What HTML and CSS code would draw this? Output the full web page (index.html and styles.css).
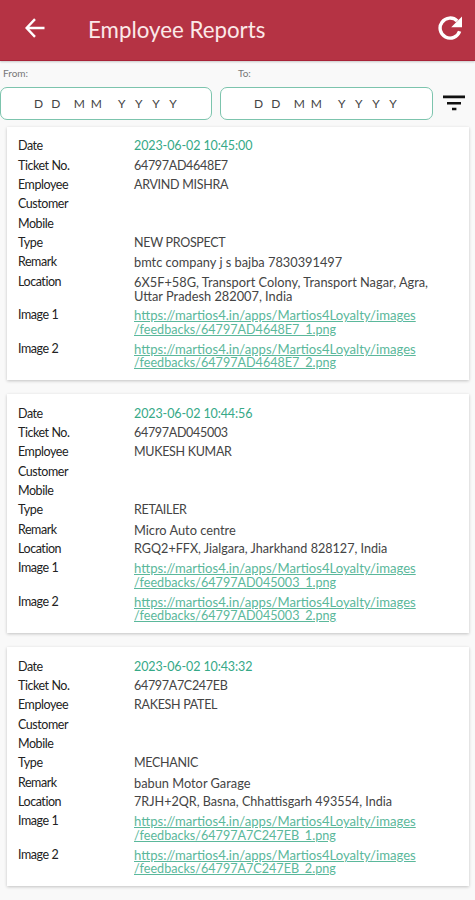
FILE: index.html
```
<!DOCTYPE html>
<html lang="en">
  <head>
    <meta charset="utf-8">
    <title>Employee Reports</title>
    <link rel="stylesheet" href="styles.css">
  </head>
  <body>
    <header class="topbar">
      <svg class="icon-back" viewBox="0 0 20 20" fill="none" stroke="#fff" stroke-width="2.4">
        <path d="M19.5 10H2M10 1.2L1.6 10L10 18.8" />
      </svg>
      <h1>Employee Reports</h1>
      <svg class="icon-refresh" viewBox="0 0 24 24" fill="none" stroke="#fff" stroke-width="3.4">
        <path d="M19.2 5A10 10 0 1 0 21.6 15.2" />
        <path d="M24 0.5V11.2H13.2z" fill="#fff" stroke="none" />
      </svg>
    </header>
    <section class="filters">
      <div class="field">
        <label>From:</label>
        <div class="date-box"><span class="dd">DD</span><span class="mm">MM</span><span class="yyyy">YYYY</span></div>
      </div>
      <div class="field field-to">
        <label>To:</label>
        <div class="date-box"><span class="dd">DD</span><span class="mm">MM</span><span class="yyyy">YYYY</span></div>
      </div>
      <svg class="icon-filter" viewBox="0 0 22 16" fill="#111">
        <path d="M0 0.6h22v2.6H0zM4 7h14v2.5H4zM9 12.8h4.4v2.4H9z" />
      </svg>
    </section>
    <main class="reports">
      <dl class="card">
        <dt>Date</dt><dd class="date">2023-06-02 10:45:00</dd>
        <dt>Ticket No.</dt><dd class="caps">64797AD4648E7</dd>
        <dt>Employee</dt><dd class="caps">ARVIND MISHRA</dd>
        <dt>Customer</dt><dd></dd>
        <dt>Mobile</dt><dd></dd>
        <dt>Type</dt><dd class="caps">NEW PROSPECT</dd>
        <dt>Remark</dt><dd>bmtc company j s bajba 7830391497</dd>
        <dt>Location</dt><dd>6X5F+58G, Transport Colony, Transport Nagar, Agra,<br>Uttar Pradesh 282007, India</dd>
        <dt>Image 1</dt><dd><a class="link">https://martios4.in/apps/Martios4Loyalty/images<span class="file">/feedbacks/64797AD4648E7_1.png</span></a></dd>
        <dt>Image 2</dt><dd><a class="link">https://martios4.in/apps/Martios4Loyalty/images<span class="file">/feedbacks/64797AD4648E7_2.png</span></a></dd>
      </dl>
      <dl class="card">
        <dt>Date</dt><dd class="date">2023-06-02 10:44:56</dd>
        <dt>Ticket No.</dt><dd class="caps">64797AD045003</dd>
        <dt>Employee</dt><dd class="caps">MUKESH KUMAR</dd>
        <dt>Customer</dt><dd></dd>
        <dt>Mobile</dt><dd></dd>
        <dt>Type</dt><dd class="caps">RETAILER</dd>
        <dt>Remark</dt><dd>Micro Auto centre</dd>
        <dt>Location</dt><dd class="short">RGQ2+FFX, Jialgara, Jharkhand 828127, India</dd>
        <dt>Image 1</dt><dd><a class="link">https://martios4.in/apps/Martios4Loyalty/images<span class="file">/feedbacks/64797AD045003_1.png</span></a></dd>
        <dt>Image 2</dt><dd><a class="link">https://martios4.in/apps/Martios4Loyalty/images<span class="file">/feedbacks/64797AD045003_2.png</span></a></dd>
      </dl>
      <dl class="card">
        <dt>Date</dt><dd class="date">2023-06-02 10:43:32</dd>
        <dt>Ticket No.</dt><dd class="caps">64797A7C247EB</dd>
        <dt>Employee</dt><dd class="caps">RAKESH PATEL</dd>
        <dt>Customer</dt><dd></dd>
        <dt>Mobile</dt><dd></dd>
        <dt>Type</dt><dd class="caps">MECHANIC</dd>
        <dt>Remark</dt><dd>babun Motor Garage</dd>
        <dt>Location</dt><dd class="short">7RJH+2QR, Basna, Chhattisgarh 493554, India</dd>
        <dt>Image 1</dt><dd><a class="link">https://martios4.in/apps/Martios4Loyalty/images<span class="file">/feedbacks/64797A7C247EB_1.png</span></a></dd>
        <dt>Image 2</dt><dd><a class="link">https://martios4.in/apps/Martios4Loyalty/images<span class="file">/feedbacks/64797A7C247EB_2.png</span></a></dd>
      </dl>
    </main>
  </body>
</html>
```
FILE: styles.css
```
* {
  box-sizing: border-box;
}
html,
body {
  margin: 0;
  padding: 0;
}
body {
  height: 900px;
  overflow: hidden;
  font-family: Lato, "Liberation Sans", sans-serif;
  background: #f9f9f9;
  color: #444;
}
.topbar {
  display: flex;
  align-items: center;
  height: 61px;
  padding: 0 13px 4px 25px;
  background: #b53344;
  border-bottom: 1px solid #a82338;
  box-shadow: 0 1px 2px rgba(0, 0, 0, 0.2);
}
.icon-back {
  width: 20px;
  height: 20px;
}
.topbar h1 {
  flex: 1;
  margin: 2px 0 0 43px;
  font-size: 22.3px;
  font-weight: 400;
  color: #fbe9e9;
}
.icon-refresh {
  width: 24px;
  height: 24px;
}
.filters {
  display: flex;
  align-items: flex-end;
  height: 59px;
}
.field {
  width: 212px;
  margin-right: 8px;
}
.field-to {
  width: 213px;
  margin-right: 10px;
}
.field label {
  display: block;
  padding-left: 3px;
  font-size: 10px;
  line-height: 12px;
  margin-bottom: 8px;
  color: #777;
}
.field-to label {
  padding-left: 18px;
}
.date-box {
  display: flex;
  height: 33px;
  padding-left: 33px;
  border: 1.5px solid #7cc4ad;
  border-radius: 7px;
  background: #fff;
  font-size: 12px;
  line-height: 32px;
  color: #444;
}
.dd {
  letter-spacing: 8.2px;
  margin-right: 5px;
}
.mm {
  letter-spacing: 6px;
  margin-right: 10px;
}
.yyyy {
  letter-spacing: 9.6px;
}
.icon-filter {
  width: 22px;
  height: 16px;
  margin-bottom: 9px;
}
.reports {
  display: flex;
  flex-direction: column;
  gap: 14px;
  padding: 7px 6px 0 7px;
}
.card {
  display: grid;
  grid-template-columns: 116px 1fr;
  row-gap: 5.05px;
  margin: 0;
  padding: 12.3px 11px 9.7px;
  background: #fff;
  box-shadow: 0 1px 3px rgba(0, 0, 0, 0.22);
  font-size: 12.8px;
  line-height: 14.3px;
}
.card dt {
  font-size: 12.5px;
  letter-spacing: -0.45px;
  color: #222;
}
.card dd {
  margin: 0;
  white-space: nowrap;
}
.card .caps {
  font-size: 12.5px;
  letter-spacing: -0.3px;
}
.card .date {
  font-size: 12.5px;
  letter-spacing: -0.1px;
  color: #36a987;
}
.card .short {
  font-size: 12.6px;
}
.link {
  display: block;
  font-size: 13.1px;
  color: #5bb89b;
  text-decoration: underline;
}
.file {
  display: block;
  font-size: 12.6px;
}
```
